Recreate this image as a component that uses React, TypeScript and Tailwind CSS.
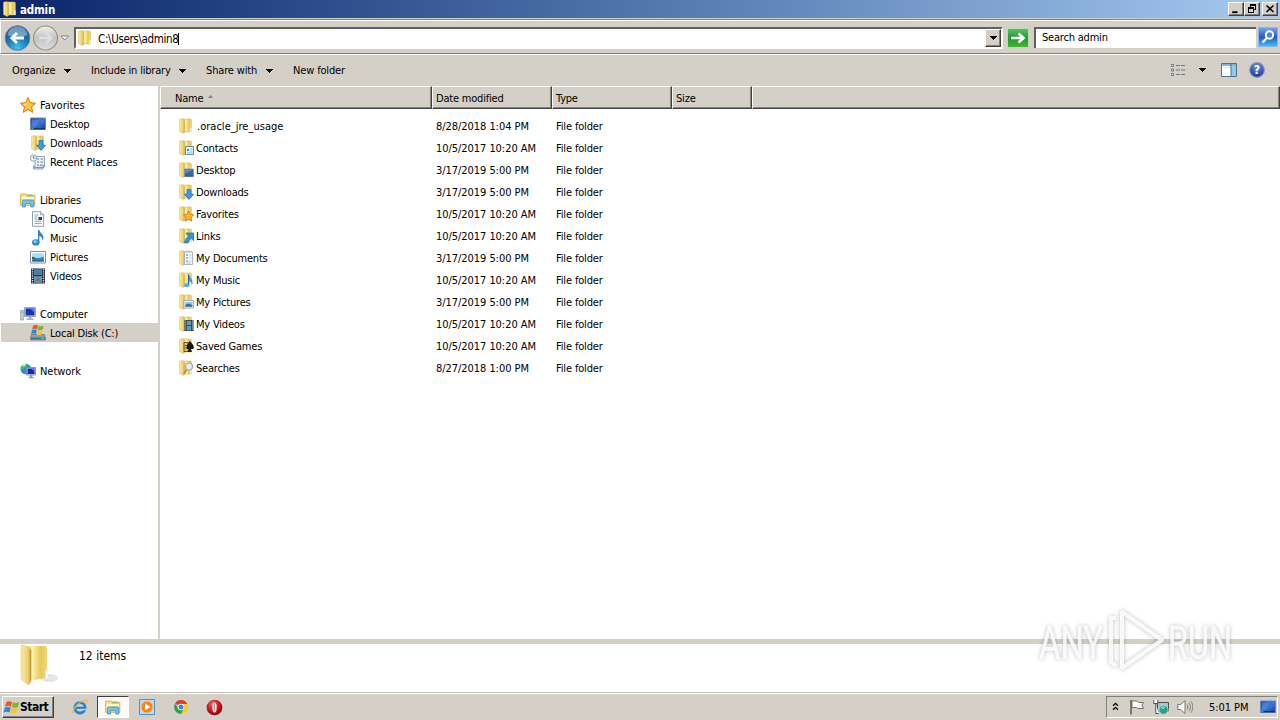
import type { ReactNode } from "react";
import clsx from "clsx";

type IconName =
  | "folder"
  | "contacts"
  | "desktop"
  | "downloads"
  | "star"
  | "links"
  | "document"
  | "music"
  | "pictures"
  | "videos"
  | "games"
  | "search";

type FileRow = { name: string; date: string; icon: IconName };

const FILES: FileRow[] = [
  { name: ".oracle_jre_usage", date: "8/28/2018 1:04 PM", icon: "folder" },
  { name: "Contacts", date: "10/5/2017 10:20 AM", icon: "contacts" },
  { name: "Desktop", date: "3/17/2019 5:00 PM", icon: "desktop" },
  { name: "Downloads", date: "3/17/2019 5:00 PM", icon: "downloads" },
  { name: "Favorites", date: "10/5/2017 10:20 AM", icon: "star" },
  { name: "Links", date: "10/5/2017 10:20 AM", icon: "links" },
  { name: "My Documents", date: "3/17/2019 5:00 PM", icon: "document" },
  { name: "My Music", date: "10/5/2017 10:20 AM", icon: "music" },
  { name: "My Pictures", date: "3/17/2019 5:00 PM", icon: "pictures" },
  { name: "My Videos", date: "10/5/2017 10:20 AM", icon: "videos" },
  { name: "Saved Games", date: "10/5/2017 10:20 AM", icon: "games" },
  { name: "Searches", date: "8/27/2018 1:00 PM", icon: "search" },
];

function Svg({ children, className = "h-4 w-4" }: { children: ReactNode; className?: string }) {
  return (
    <svg viewBox="0 0 16 16" className={clsx("block shrink-0", className)}>
      {children}
    </svg>
  );
}

function Defs() {
  return (
    <svg className="absolute h-0 w-0">
      <defs>
        <linearGradient id="fold" x1="0" x2="1">
          <stop offset="0" stopColor="#f4dd80" />
          <stop offset="0.35" stopColor="#fbf0a8" />
          <stop offset="0.7" stopColor="#e8c95a" />
          <stop offset="1" stopColor="#f0d876" />
        </linearGradient>
        <linearGradient id="foldFront" x1="0" x2="1">
          <stop offset="0" stopColor="#fbeca4" />
          <stop offset="0.7" stopColor="#ecd070" />
          <stop offset="1" stopColor="#c9a540" />
        </linearGradient>
        <linearGradient id="screen" x1="0" y1="0" x2="1" y2="1">
          <stop offset="0" stopColor="#1d3f9c" />
          <stop offset="0.5" stopColor="#3f77d8" />
          <stop offset="1" stopColor="#173a8c" />
        </linearGradient>
        <radialGradient id="back" cx="0.5" cy="0.9" r="0.9">
          <stop offset="0" stopColor="#3fc3ee" />
          <stop offset="0.5" stopColor="#1779b5" />
          <stop offset="1" stopColor="#1c4c80" />
        </radialGradient>
        <linearGradient id="forward" x1="0" y1="0" x2="0" y2="1">
          <stop offset="0" stopColor="#f0f0f0" />
          <stop offset="0.5" stopColor="#c3c3c3" />
          <stop offset="1" stopColor="#dedede" />
        </linearGradient>
        <linearGradient id="go" x1="0" y1="0" x2="0" y2="1">
          <stop offset="0" stopColor="#5ec169" />
          <stop offset="0.5" stopColor="#1f9a31" />
          <stop offset="1" stopColor="#47b52c" />
        </linearGradient>
        <linearGradient id="find" x1="0" y1="0" x2="0" y2="1">
          <stop offset="0" stopColor="#7fa6ea" />
          <stop offset="0.5" stopColor="#2458c8" />
          <stop offset="1" stopColor="#38c6f2" />
        </linearGradient>
        <radialGradient id="help" cx="0.5" cy="0.3" r="0.7">
          <stop offset="0" stopColor="#6f93e6" />
          <stop offset="1" stopColor="#14329c" />
        </radialGradient>
        <radialGradient id="opera" cx="0.4" cy="0.3" r="0.8">
          <stop offset="0" stopColor="#f06a6a" />
          <stop offset="0.5" stopColor="#c8141c" />
          <stop offset="1" stopColor="#7a0008" />
        </radialGradient>
      </defs>
    </svg>
  );
}

const STAR = "M8 .6l2.2 5 5.3.6-4 3.6 1.2 5.4L8 12.4l-4.7 2.8 1.2-5.4-4-3.6 5.3-.6z";

function FolderShape() {
  return (
    <>
      <path d="M5 1h7.600l.8.8v12.200H6z" fill="url(#fold)" stroke="#cfae48" strokeWidth=".5" />
      <path d="M1.500 1.200 4.800.600l1.800 1.600V14.600L5.200 15.400 1.500 13.600z" fill="url(#foldFront)" stroke="#d6b957" strokeWidth=".5" />
      <path d="M12.200 9.500v4.500h1.300v-4.500z" fill="#f6f6e8" />
    </>
  );
}

const OVERLAYS: Record<IconName, ReactNode> = {
  folder: null,
  contacts: (
    <>
      <path d="M7.500 6.500h8v8h-8z" fill="#f3f9fd" stroke="#5c8fb5" />
      <path d="M9 9h2v2H9z" fill="#3c7fc0" />
      <path d="M12 9h2.400M12 11h2.400M9 12.800h5.400" stroke="#7ba9cc" strokeWidth=".8" />
    </>
  ),
  desktop: (
    <>
      <path d="M6.500 7h9v7.500h-9z" fill="#3d6799" stroke="#7f97b8" strokeWidth=".8" />
      <path d="M7 7.500h8L9 11H7z" fill="#5f8cc0" />
      <path d="M7 13.500h8.200v1H7z" fill="#2c4c80" />
    </>
  ),
  downloads: <path d="M9 5.500h4v4.700h2.600L11 15.400 6.400 10.200H9z" fill="#3c9be6" stroke="#1767b0" strokeWidth=".7" />,
  star: (
    <g transform="translate(5 4.500) scale(.7)">
      <path d={STAR} fill="#ffb42e" stroke="#d9731a" strokeWidth="1.200" />
    </g>
  ),
  links: (
    <path d="M8 5h8v8l-2.500-2.500c-2 1-3.200 2.500-3.500 4.500H6.500c.2-3 1.800-5 4-6.500z" fill="#2f93dd" stroke="#1463a8" strokeWidth=".6" />
  ),
  document: (
    <>
      <path d="M6.500 2h8v12.500h-8z" fill="#fafcff" stroke="#97a7b8" strokeWidth=".8" />
      <path d="M8 5h2M8 8h2M8 11h2" stroke="#3a78c2" />
      <path d="M11 5h2.500M11 8h2.500M11 11h2.500M8 13h5" stroke="#9fb0c4" strokeWidth=".8" />
    </>
  ),
  music: (
    <>
      <path d="M10.600 2.500c.3 3 4.400 4.500 3.500 9.500-.5-2.500-2-3.200-3.500-3.500z" fill="#3f9cdc" stroke="#196aa8" strokeWidth=".4" />
      <path d="M10.500 3v10" stroke="#196aa8" />
      <ellipse cx="8.500" cy="13.200" rx="2.400" ry="1.900" fill="#49aef0" />
    </>
  ),
  pictures: (
    <>
      <path d="M6 6.500h9.500v7.500H6z" fill="#fff" stroke="#8aa0b6" strokeWidth=".8" />
      <path d="M7.200 7.800h7.200v5H7.200z" fill="#8cc8f2" />
      <path d="M7.200 11l3-1.500 4.200 1.500v1.800H7.200z" fill="#3b6f8e" />
    </>
  ),
  videos: (
    <>
      <path d="M6.500 4h9v11h-9z" fill="#25313f" />
      <path d="M8.700 4.800h4.600v4.500H8.700zM8.700 10h4.600v4.400H8.700z" fill="#5b9bc0" />
      <path d="M7.600 4.500v10M14.500 4.500v10" stroke="#e8eef2" strokeDasharray="1 1" strokeWidth=".9" />
    </>
  ),
  games: (
    <>
      <path d="M6 4.500h4v9H6z" fill="#e6c766" stroke="#4a3a1a" strokeWidth=".8" />
      <path d="M6.500 7.500h3M6.500 10h3" stroke="#4a3a1a" strokeWidth=".8" />
      <path d="M11.500 3c3 2.500 4.400 4.500 4.400 6.500 0 1.600-1.800 2-3 1.200l1 3.300H9.800l1-3.300C9.500 11.500 8.500 10.600 8.500 9.200c0-1.800 1.500-3.200 3-6.200z" fill="#15171a" />
    </>
  ),
  search: (
    <>
      <path d="M8.700 9.200 5.800 13.800" stroke="#b58b3e" strokeWidth="1.600" />
      <circle cx="11" cy="6.500" r="3.500" fill="#e2eef5" stroke="#9ba7ae" strokeWidth="1.100" />
    </>
  ),
};

function FolderIcon({ kind = "folder" }: { kind?: IconName }) {
  return (
    <Svg>
      <FolderShape />
      {OVERLAYS[kind]}
    </Svg>
  );
}

function StarIcon() {
  return (
    <Svg>
      <path d={STAR} fill="#ffc83c" stroke="#e07f1c" strokeWidth="1.100" strokeLinejoin="round" />
      <path d="M8 2.800 6.600 6.400 2.800 7l3 2.200z" fill="#ffe98e" />
    </Svg>
  );
}

function DesktopIcon() {
  return (
    <Svg>
      <path d="M.5 2h15v11.500H.5z" fill="url(#screen)" stroke="#6a86b8" />
      <path d="M2 3.500h8L5 10.500H2z" fill="#5f96ea" opacity=".5" />
      <path d="M1 12h14v1.400H1z" fill="#16306e" />
      <path d="M1.300 12.200h2v1h-2z" fill="#5fd0a0" />
    </Svg>
  );
}

function RecentIcon() {
  return (
    <Svg>
      <path d="M5 2.500h9.500v9H13v3.500H3.500v-3H5z" fill="#eef2f7" stroke="#8b99ad" strokeWidth=".9" />
      <path d="M7 5h2M7 8h2M7 11h2M10.500 5H13M10.500 8H13M10 11h2.500" stroke="#5d7fa8" />
      <path d="M3.500 13.500h9.500l2-2" stroke="#8b99ad" strokeWidth="1.400" fill="none" />
      <circle cx="3.500" cy="4" r="3.200" fill="#e9f1f8" stroke="#8d9db2" strokeWidth=".9" />
      <path d="M3.500 2v2.200H5.300" stroke="#556b88" strokeWidth=".8" fill="none" />
    </Svg>
  );
}

function LibrariesIcon({ className }: { className?: string }) {
  return (
    <Svg className={className}>
      <path d="M.6 2.100h5.600l1.200 1.200h7.400v10H.6z" fill="#f7e48e" stroke="#c9a93c" strokeWidth=".8" />
      <path d="M1.400 5h12.800v2H1.400z" fill="#fdf6c6" />
      <path d="M6.500 4h7M7 3h5" stroke="#6fb36b" strokeWidth=".7" />
      <path d="M2.400 15V9.600C2.400 8.600 3 8 4 8h8.200c1 0 1.600.6 1.600 1.600V15h-3v-3.400H5.400V15z" fill="#74c2ea" stroke="#3c8fc2" strokeWidth=".8" />
    </Svg>
  );
}

function DocumentIcon() {
  return (
    <Svg>
      <path d="M2.500.7h8.200l3 3v11.600H2.500z" fill="#fff" stroke="#8494a8" strokeWidth=".9" />
      <path d="M10.500.8v3h3" fill="#dbe4ee" stroke="#8494a8" strokeWidth=".7" />
      <path d="M4.500 4h4M4.500 6h3M4.500 8h3M4.500 10.200h7.200M4.500 12.400h7.200" stroke="#6e96c6" strokeWidth=".9" />
      <path d="M8.500 6h3.500v3H8.500z" fill="#27406c" />
    </Svg>
  );
}

function MusicIcon() {
  return (
    <Svg>
      <path d="M8 0h1.300c.3 3 4.600 4.200 4.200 8.200-.1 1.200-.6 2-1.200 2.500.5-2.800-1-4.200-3-4.600V12.300H8z" fill="#2d83c6" />
      <ellipse cx="5.800" cy="12.400" rx="3.800" ry="3.100" fill="#2b87d0" />
      <ellipse cx="5.200" cy="11.700" rx="2" ry="1.400" fill="#7fc8f5" />
    </Svg>
  );
}

function PicturesIcon() {
  return (
    <Svg>
      <path d="M.5 2.500h15v11.500H.5z" fill="#fff" stroke="#7b8ea3" />
      <path d="M2.200 4.200h11.600v8.200H2.200z" fill="#a9dcf5" />
      <path d="M2.200 8.600c4 .2 6 1.400 11.600-1v4.800H2.200z" fill="#2f8b9a" />
      <path d="M2.200 7.400 6 9.200l-3.800.8z" fill="#226a3c" />
      <path d="M2.200 11h11.600v1.400H2.200z" fill="#2a64a0" />
    </Svg>
  );
}

function VideosIcon() {
  return (
    <Svg>
      <path d="M1 .5h14v15H1z" fill="#1c2733" />
      <path d="M4 1.200h8v6H4z" fill="#3f86b8" />
      <path d="M4 8.200h8v6.600H4z" fill="#5a9cc8" />
      <path d="m5 6 2.500-3L11 6.500zM5 13l3-4 3.500 4z" fill="#a8503c" opacity=".7" />
      <path d="M2.500 1v14M13.500 1v14" stroke="#e6edf2" strokeWidth="1.400" strokeDasharray="1.200 1" />
    </Svg>
  );
}

function ComputerIcon() {
  return (
    <Svg>
      <path d="M.6 4.500h2.800v9.500H.6z" fill="#c9d2dc" stroke="#8793a3" strokeWidth=".7" />
      <path d="M1.200 6.200h1.600" stroke="#5fc26c" />
      <path d="M4.500 1.500h11v9h-11z" fill="#cfd8e6" stroke="#8292ad" strokeWidth=".8" />
      <path d="M5.600 2.500h8.800v7H5.600z" fill="#1b2fb8" />
      <path d="M10 2.500h4.400v4z" fill="#5d78ea" />
      <path d="M8.500 10.500h3v2h2v1.500h-7v-1.500h2z" fill="#a5b0c4" />
    </Svg>
  );
}

function Flag() {
  return (
    <>
      <path d="M3.200 2.200c2-1.200 3.300-1 5-.2L7.200 6C5.500 5.200 4 5.200 2.200 6.200z" fill="#ea5a24" />
      <path d="M9 2.300c1.700.8 3.200.7 5-.3l-1 4.200c-1.800.9-3.300.9-5 .1z" fill="#7cb52c" />
      <path d="M2 7c1.900-1 3.300-1 5-.2l-1 4c-1.700-.8-3.200-.8-5 .2z" fill="#2f86d2" />
      <path d="M7.800 7.200c1.700.8 3.200.8 5-.1l-1 4.200c-1.800.9-3.300.9-5 .1z" fill="#f8c22c" />
    </>
  );
}

function DiskIcon() {
  return (
    <Svg>
      <path d="M1.500 9.500h13l1 3v2.500H.5v-2.500z" fill="#8a9cad" stroke="#5b6c7c" strokeWidth=".6" />
      <path d="M1 12.500h14v2H1z" fill="#3e7b96" />
      <path d="M11.500 13h2.500v1h-2.500z" fill="#5fe07a" />
      <g transform="translate(0 -1.500) scale(.98)">
        <Flag />
      </g>
    </Svg>
  );
}

function NetworkIcon() {
  return (
    <Svg>
      <circle cx="5.800" cy="6" r="5.300" fill="#2b8fc6" />
      <path d="M2 3c2-2 4-2.500 6-2L6 4 3 6 1 7zM5 8l3-1 1 2-2 2.200z" fill="#4fbf62" />
      <path d="M2 2.800C3.200 1.400 4.800.8 6 .9L4 3.400z" fill="#d8f2f6" />
      <path d="M6.500 4.500h9v7.500h-9z" fill="#cfd8e6" stroke="#6f80a5" strokeWidth=".8" />
      <path d="M7.500 5.500h7v5.500h-7z" fill="#1428b4" />
      <path d="M11 5.500h3.500v3z" fill="#5d78ea" />
      <path d="M9.800 12h2.500v2h1.500v1.300H8.500V14h1.300z" fill="#8ea0bb" />
    </Svg>
  );
}

type SideItem = { label: string; icon: ReactNode; child?: boolean; active?: boolean; spacing?: string };

const SIDEBAR: SideItem[][] = [
  [
    { label: "Favorites", icon: <StarIcon />, spacing: "tracking-normal" },
    { label: "Desktop", icon: <DesktopIcon />, child: true },
    { label: "Downloads", icon: <FolderIcon kind="downloads" />, child: true },
    { label: "Recent Places", icon: <RecentIcon />, child: true, spacing: "tracking-[-0.1px]" },
  ],
  [
    { label: "Libraries", icon: <LibrariesIcon /> },
    { label: "Documents", icon: <DocumentIcon />, child: true, spacing: "tracking-[-0.35px]" },
    { label: "Music", icon: <MusicIcon />, child: true },
    { label: "Pictures", icon: <PicturesIcon />, child: true, spacing: "tracking-[-0.1px]" },
    { label: "Videos", icon: <VideosIcon />, child: true },
  ],
  [
    { label: "Computer", icon: <ComputerIcon /> },
    { label: "Local Disk (C:)", icon: <DiskIcon />, child: true, active: true, spacing: "tracking-[-0.2px]" },
  ],
  [{ label: "Network", icon: <NetworkIcon />, spacing: "tracking-[-0.05px]" }],
];

function Caret({ className }: { className?: string }) {
  return (
    <svg viewBox="0 0 7 4" className={clsx("block h-1 w-[7px] shrink-0", className)} shapeRendering="crispEdges">
      <path d="M0 0h7L3.500 4z" fill="#000" />
    </svg>
  );
}

const RAISED =
  "border border-t-white border-l-white border-r-[#404040] border-b-[#404040] bg-[#d4cfc7] shadow-[inset_-1px_-1px_0_#808080]";

function TitleBar() {
  return (
    <div className="flex h-[18px] items-center bg-linear-to-r from-[#0a246a] to-[#a6caf0] pr-[2px] pl-[2px]">
      <FolderIcon />
      <span className="ml-[2px] flex-1 pt-px text-[11.5px] font-bold tracking-[-0.2px] text-white">admin</span>
      <div className="flex">
        <div className={clsx("h-[14px] w-4", RAISED)}>
          <Svg className="h-3 w-[14px]">
            <path d="M3 11h7v2.500H3z" fill="#000" />
          </Svg>
        </div>
        <div className={clsx("h-[14px] w-4", RAISED)}>
          <svg viewBox="0 0 14 12" className="block h-3 w-[14px]" shapeRendering="crispEdges">
            <path d="M5 1h6v2H5zM5 3h1v1H5zM10 3h1v4h-1zM9 6h1v1H9zM3 4h6v2H3zM3 6h1v4H3zM8 6h1v4H8zM3 9h6v1H3z" fill="#000" />
          </svg>
        </div>
        <div className={clsx("ml-[2px] h-[14px] w-4", RAISED)}>
          <svg viewBox="0 0 14 12" className="block h-3 w-[14px]">
            <path d="M3.500 2.500l7 6.500M10.500 2.500l-7 6.500" stroke="#000" strokeWidth="1.600" />
          </svg>
        </div>
      </div>
    </div>
  );
}

function AddressBar() {
  return (
    <div className="mt-px flex h-[35px] items-center border-t border-b border-l border-t-[#808080] border-b-[#808080] border-l-white pt-[2px] pr-[2px] pl-[3px] shadow-[inset_0_1px_0_#fff]">
      <svg viewBox="0 0 66 28" className="block h-7 w-[66px] shrink-0">
        <circle cx="13.500" cy="14" r="12.300" fill="url(#back)" stroke="#6b7c8e" strokeWidth="1" />
        <path d="M3.500 11C4.500 4.500 9.500 2.500 13.500 2.500S22.500 4.500 23.500 11c-5 2-15 2-20 0z" fill="#bfdcf0" opacity=".5" />
        <path d="M20 14H8.500M13 9l-5.200 5 5.200 5" stroke="#fff" strokeWidth="2.800" fill="none" />
        <circle cx="41.500" cy="14" r="12" fill="url(#forward)" stroke="#8f8f8f" strokeWidth="1.100" />
        <path d="M35 14h11.500M42 9l5.200 5-5.200 5" stroke="#dedede" strokeWidth="2.600" fill="none" />
        <path d="M57 12h7.500L60.800 16z" fill="#fff" stroke="#777" strokeWidth=".9" />
      </svg>
      <div className="ml-[4px] flex h-[22px] w-[929px] items-center border-2 border-t-[#606060] border-r-white border-b-white border-l-[#606060] bg-white pl-px">
        <FolderIcon />
        <span className="mt-[2px] ml-[5px] text-[11.5px] tracking-[-0.35px]">C:\Users\admin8</span>
        <span className="mt-[2px] h-3 w-px bg-black" />
        <div className={clsx("ml-auto flex h-[18px] w-[16px] items-center justify-center", RAISED)}>
          <Caret />
        </div>
      </div>
      <svg viewBox="0 0 22 20" className="ml-[4px] block h-5 w-[22px] shrink-0">
        <path d="M.5.5h21v19H.5z" fill="url(#go)" stroke="#b9dcb4" />
        <path d="M4 10h12M11.500 5.500l5 4.500-5 4.500" stroke="#fff" strokeWidth="2.600" fill="none" />
      </svg>
      <div className="mb-px ml-[5px] flex h-[21px] flex-1 items-center border-t-2 border-l-2 border-t-[#606060] border-l-[#606060] bg-white pb-px pl-[6px]">
        <span className="text-[11px] tracking-[-0.2px]">Search admin</span>
      </div>
      <svg viewBox="0 0 20 20" className="mb-px ml-[2px] block h-5 w-5 shrink-0">
        <path d="M.5.5h19v19H.5z" fill="url(#find)" stroke="#8cb4ea" />
        <circle cx="11.500" cy="8" r="3.700" fill="#4f85e0" stroke="#fff" strokeWidth="2" />
        <path d="M8.800 11 4.500 15.500" stroke="#fff" strokeWidth="2.400" />
      </svg>
    </div>
  );
}

function CommandBar() {
  return (
    <div className="flex h-[32px] items-center border-t border-white pl-3 text-[11px]">
      <div className="flex w-[79px] items-center">
        <span className="w-[52px] tracking-[-0.1px]">Organize</span>
        <Caret />
      </div>
      <div className="flex w-[115px] items-center">
        <span className="w-[88px] tracking-[-0.2px]">Include in library</span>
        <Caret />
      </div>
      <div className="flex w-[87px] items-center">
        <span className="w-[60px] tracking-[-0.15px]">Share with</span>
        <Caret />
      </div>
      <span className="tracking-[-0.15px]">New folder</span>
      <div className="ml-auto flex items-center pr-[15px] pb-px">
        <Svg>
          <path d="M1.500 2.500h2v2h-2zM1.500 7h2v2h-2zM1.500 11.500h2v2h-2z" fill="#fff" stroke="#667" strokeWidth=".9" />
          <path d="M6 3.500h4M11 3.500h4M6 8h4M11 8h4M6 12.500h4M11 12.500h4" stroke="#6d7686" />
        </Svg>
        <Caret className="ml-[13px]" />
        <Svg className="ml-[15px] h-4 w-4">
          <path d="M.5 1.500h15v13H.5z" fill="#fff" stroke="#4b6f96" />
          <path d="M1 2h14v2H1z" fill="#86b4da" />
          <path d="M10 4h5v10h-5z" fill="#8ccdec" />
          <path d="M10 2v12" stroke="#4b6f96" />
          <path d="M2 5.500h7" stroke="#d5dde6" />
        </Svg>
        <svg viewBox="0 0 16 16" className="ml-[12px] block h-4 w-4">
          <circle cx="8" cy="8" r="7.300" fill="url(#help)" stroke="#8794b5" strokeWidth="1.200" />
          <text x="8" y="12" textAnchor="middle" className="fill-white text-[12px] font-bold">?</text>
        </svg>
      </div>
    </div>
  );
}

function Sidebar() {
  return (
    <div className="flex w-[158px] shrink-0 flex-col gap-[19px] bg-white pt-[9px]">
      {SIDEBAR.map((group) => (
        <div key={group[0].label}>
          {group.map((item) => (
            <div
              key={item.label}
              className={clsx(
                "ml-px flex h-[19px] items-center gap-1",
                item.child ? "pl-[29px]" : "pl-[19px]",
                item.active && "bg-[#d4cfc7]",
              )}
            >
              {item.icon}
              <span className={clsx("pt-[2px]", item.spacing ?? "tracking-[-0.2px]")}>{item.label}</span>
            </div>
          ))}
        </div>
      ))}
    </div>
  );
}

function HeaderCell({ children, className }: { children?: ReactNode; className: string }) {
  return (
    <div
      className={clsx(
        "flex h-[23px] items-center border-t border-r border-b border-l border-t-white border-r-[#404040] border-b-[#404040] border-l-white bg-[#d4cfc7] pt-[2px] tracking-[-0.2px] shadow-[inset_-1px_-1px_0_#8a8680]",
        className,
      )}
    >
      {children}
    </div>
  );
}

function FileList() {
  return (
    <div className="ml-[2px] flex-1 bg-white">
      <div className="flex">
        <HeaderCell className="w-[272px] pl-[14px]">
          Name
          <svg viewBox="0 0 5 3" className="mb-[5px] ml-[5px] h-[3px] w-[5px]">
            <path d="M0 3h5L2.500 0z" fill="#858585" />
          </svg>
        </HeaderCell>
        <HeaderCell className="w-[120px] pl-[3px]">Date modified</HeaderCell>
        <HeaderCell className="w-[120px] pl-[3px]">Type</HeaderCell>
        <HeaderCell className="w-[80px] pl-[3px]">Size</HeaderCell>
        <HeaderCell className="flex-1" />
      </div>
      <div className="pt-[6px]">
        {FILES.map((file) => (
          <div key={file.name} className="flex h-[22px] items-center pl-[18px]">
            <FolderIcon kind={file.icon} />
            <span
              className={clsx(
                "ml-[2px] w-[240px] pt-[2px]",
                file.icon === "folder" ? "pl-px tracking-[0.02px]" : "tracking-[-0.2px]",
              )}
            >
              {file.name}
            </span>
            <span className="w-[120px] pt-[2px] tracking-[-0.05px]">{file.date}</span>
            <span className="pt-[2px] tracking-[-0.15px]">File folder</span>
          </div>
        ))}
      </div>
    </div>
  );
}

function DetailsPane() {
  return (
    <div className="flex h-[48px] bg-white pl-5">
      <svg viewBox="0 0 40 44" className="block h-11 w-10">
        <ellipse cx="29" cy="34" rx="9" ry="4" fill="#999" opacity=".25" />
        <path d="M5 2h21l1 1.500V33.500L10 37z" fill="url(#fold)" />
        <path d="M1 1.500 2.500.8 9.500 3.500 11 6v31.500L8.500 41 1 35z" fill="url(#foldFront)" stroke="#dcc269" strokeWidth=".5" />
        <path d="M10.500 6v30" stroke="#b9983c" strokeWidth="1.200" />
        <path d="M25.500 27l2.500-3v10l-2.500.5z" fill="#f4fbfb" />
      </svg>
      <span className="mt-[5px] ml-[19px] text-[12px]">12 items</span>
    </div>
  );
}

function Watermark() {
  return (
    <svg viewBox="0 0 204 72" className="absolute top-[604px] left-[1033px] h-[72px] w-[204px] drop-shadow-[0_0_2px_rgba(0,0,0,0.3)]">
      <g fill="#fff" fillOpacity=".85" fontFamily="Roboto" fontWeight="400" fontSize="46" stroke="#fff" strokeOpacity=".5" strokeWidth=".8">
        <text x="6" y="55" textLength="64" lengthAdjust="spacingAndGlyphs">ANY</text>
        <text x="135" y="55" textLength="64" lengthAdjust="spacingAndGlyphs">RUN</text>
      </g>
      <g fill="none" stroke="#fff" strokeOpacity=".85" strokeWidth="4" strokeLinejoin="round">
        <path d="M89 8 129 36 89 64z" />
        <path d="M83 14h-5v44l5 4" />
      </g>
    </svg>
  );
}

function Taskbar() {
  return (
    <div className="flex h-[27px] items-center border-t border-white bg-[#d4cfc7] pl-[2px]">
      <div className={clsx("flex h-[22px] w-[52px] items-center", RAISED)}>
        <Svg className="h-[17px] w-[17px]">
          <g transform="translate(-.5 .5) scale(1.120)">
            <Flag />
          </g>
        </Svg>
        <span className="text-[12px] font-bold tracking-[-0.5px]">Start</span>
      </div>
      <Svg className="ml-[18px] h-4 w-4">
        <circle cx="8" cy="8.800" r="5.200" fill="none" stroke="#2a80d6" strokeWidth="2.800" />
        <path d="M4 8.800h9.500" stroke="#2a80d6" strokeWidth="2.200" />
        <path d="M10.500 11.200h4v-1.400h-4z" fill="#d4cfc7" />
        <path d="M1.500 14.500C-.5 11 6 3.500 11.500 1.500c3-1.100 4.200.3 3 3" fill="none" stroke="#e9bd38" strokeWidth="1.300" />
      </Svg>
      <div className="ml-[9px] flex h-[22px] w-8 items-center justify-center border border-t-[#404040] border-r-white border-b-white border-l-[#404040] bg-[#fbfaf8]">
        <LibrariesIcon />
      </div>
      <Svg className="ml-[10px] h-4 w-4">
        <path d="M.5.5h15v15H.5z" fill="#bcdaf2" stroke="#4b93cc" />
        <circle cx="8" cy="8" r="6" fill="#f6861c" stroke="#fbc880" strokeWidth=".8" />
        <path d="M6 4.600v6.800L11.500 8z" fill="#fff" />
      </Svg>
      <Svg className="ml-[18px] h-4 w-4">
        <path d="M8 8 2 4.500A7 7 0 0 1 14.300 5H8z" fill="#dc3c30" />
        <path d="M8 8V5h6.300A7 7 0 0 1 8.300 15z" fill="#f8c92c" />
        <path d="M8 8l2.500 2-2.500 5A7 7 0 0 1 2 4.500l3.500 5z" fill="#2fa24c" />
        <circle cx="8" cy="8" r="3.300" fill="#fff" />
        <circle cx="8" cy="8" r="2.500" fill="#3e82e8" />
      </Svg>
      <Svg className="ml-[17px] h-[17px] w-[17px]">
        <circle cx="8" cy="8" r="7.400" fill="url(#opera)" />
        <ellipse cx="8" cy="8" rx="2" ry="4.800" fill="#fff" />
        <ellipse cx="8" cy="8" rx=".9" ry="4" fill="#b8a0a0" />
      </Svg>
      <div className="mr-[2px] ml-auto flex h-[22px] w-[172px] items-center border border-t-[#808080] border-r-white border-b-white border-l-[#808080] pl-[5px]">
        <svg viewBox="0 0 7 9" className="mb-[2px] block h-[9px] w-[7px]">
          <path d="M1 3.800 3.500 1.300 6 3.800M1 7.800 3.500 5.300 6 7.800" stroke="#000" strokeWidth="1.300" fill="none" />
        </svg>
        <Svg className="ml-[10px] h-4 w-4">
          <path d="M2 1v14.500" stroke="#777" strokeWidth="2" />
          <path d="M3 2h5l1.500 1.500h5L13 6l1.500 3.500H9L7.500 8.500H3z" fill="#fff" stroke="#666" strokeWidth=".9" />
        </Svg>
        <Svg className="ml-[8px] h-4 w-4">
          <path d="M4.500 3.500h11v8.500h-11z" fill="#a6c3ce" stroke="#444" strokeWidth=".9" />
          <path d="M.8 1v3.500h4V1M2.800 4.500v10h3" fill="#fff" stroke="#444" strokeWidth=".9" />
          <circle cx="10.500" cy="10.800" r="4.600" fill="#2aa08a" stroke="#e5f1ee" strokeWidth=".6" />
          <path d="M7.500 9c2-2 4-2 5-.5L10 10z" fill="#8fe0c2" />
        </Svg>
        <Svg className="ml-[8px] h-4 w-4">
          <path d="M.7 5.500h3L8 1.500v13L3.700 10.500h-3z" fill="#fff" stroke="#666" strokeWidth=".9" />
          <path d="M10 5.500c1 1.500 1 3.500 0 5M12 3.800c1.800 2.500 1.800 6 0 8.400M14 2.200c2.300 3.500 2.300 8 0 11.600" fill="none" stroke="#777" strokeWidth=".9" />
        </Svg>
        <span className="ml-[16px] w-[51px] pt-px tracking-[-0.05px]">5:01 PM</span>
        <DesktopIcon />
      </div>
    </div>
  );
}

export default function App() {
  return (
    <div className="relative flex h-[720px] w-[1280px] flex-col overflow-hidden bg-[#d4cfc7] font-['DejaVu_Sans_Condensed','DejaVu_Sans',sans-serif] text-[11px] leading-[14px] whitespace-nowrap text-black">
      <Defs />
      <TitleBar />
      <AddressBar />
      <CommandBar />
      <div className="flex min-h-0 flex-1">
        <Sidebar />
        <FileList />
      </div>
      <div className="h-[5px] shrink-0 bg-[#d4cfc7]" />
      <DetailsPane />
      <div className="h-px shrink-0 bg-[#c4c0b8]" />
      <Taskbar />
      <Watermark />
    </div>
  );
}
